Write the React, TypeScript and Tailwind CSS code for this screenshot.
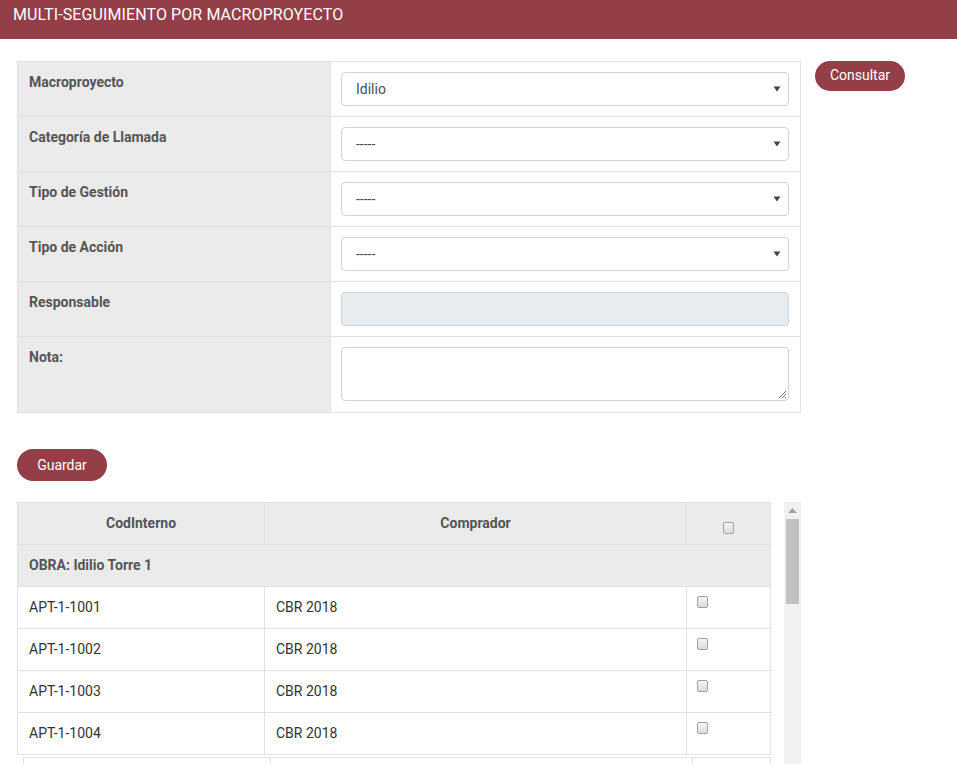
import React from "react";

const Arrow = () => (
  <svg width="8" height="6" viewBox="0 0 8 6" className="absolute right-[7px] top-[13px]">
    <path d="M0.5 0.5 L7.5 0.5 L4 5.5 Z" fill="#444" />
  </svg>
);

const Select = ({ value }: { value: string }) => (
  <div className="relative h-[34px] w-full rounded-[4px] border border-[#ced4da] bg-white">
    <span className="absolute left-[14px] top-[6px] text-[14px] leading-[20px] text-[#495057]">{value}</span>
    <Arrow />
  </div>
);

const Check = () => (
  <div className="h-[12px] w-[11px] rounded-[2px] border border-[#a0a0a0] bg-gradient-to-b from-[#f4f4f4] to-[#dcdcdc]" />
);

const rows = [
  { label: "Macroproyecto", el: <Select value="Idilio" /> },
  { label: "Categoría de Llamada", el: <Select value="-----" /> },
  { label: "Tipo de Gestión", el: <Select value="-----" /> },
  { label: "Tipo de Acción", el: <Select value="-----" /> },
  {
    label: "Responsable",
    el: <div className="h-[34px] w-full rounded-[4px] border border-[#ced4da] bg-[#e9ecef]" />,
  },
];

const data = ["APT-1-1001", "APT-1-1002", "APT-1-1003", "APT-1-1004"];

export default function App() {
  return (
    <div
      className="h-[764px] w-[957px] overflow-hidden bg-white text-[14px]"
      style={{ fontFamily: "Roboto, 'Liberation Sans', sans-serif" }}
    >
      <div className="h-[39px] bg-[#943e48] pl-[13px] pt-[4px] text-[16px] leading-[22px] tracking-[0.1px] text-white">
        MULTI-SEGUIMIENTO POR MACROPROYECTO
      </div>

      <div className="flex items-start pl-[17px] pt-[22px]">
        <div className="w-[784px] border border-[#dfe2e6]">
          {rows.map((r, i) => (
            <div key={i} className="flex h-[55px] border-b border-[#dfe2e6]">
              <div className="w-[312px] bg-[#ebebeb] pl-[11px] pt-[10px] font-bold leading-[20px] text-[#555]">
                {r.label}
              </div>
              <div className="flex-1 border-l border-[#dfe2e6] bg-white pl-[10px] pr-[11px] pt-[10px]">{r.el}</div>
            </div>
          ))}
          <div className="flex h-[75px]">
            <div className="w-[312px] bg-[#ebebeb] pl-[11px] pt-[10px] font-bold leading-[20px] text-[#555]">Nota:</div>
            <div className="flex-1 border-l border-[#dfe2e6] bg-white pl-[10px] pr-[11px] pt-[10px]">
              <div className="relative h-[54px] w-full rounded-[4px] border border-[#ced4da] bg-white">
                <svg width="9" height="9" viewBox="0 0 9 9" className="absolute bottom-[1px] right-[1px]">
                  <path d="M8 1 L1 8 M8 4 L4 8 M8 7 L7 8" stroke="#777" strokeWidth="1" />
                </svg>
              </div>
            </div>
          </div>
        </div>
        <button className="ml-[14px] h-[30px] w-[90px] rounded-full bg-[#943e48] pb-[1px] text-[14px] text-white">
          Consultar
        </button>
      </div>

      <div className="pl-[17px] pt-[36px]">
        <button className="h-[32px] w-[90px] rounded-full bg-[#943e48] text-[14px] text-white">Guardar</button>
      </div>

      <div className="flex pl-[17px] pt-[21px]">
        <div className="w-[754px]">
          <div className="border-x border-t border-[#dfe2e6]">
            <div className="flex h-[42px] border-b border-[#dfe2e6] bg-[#ebebeb] font-bold text-[#555]">
              <div className="flex w-[246px] items-center justify-center pb-[1px] leading-[20px]">CodInterno</div>
              <div className="flex w-[422px] items-center justify-center border-l border-[#dfe2e6] pb-[1px] leading-[20px]">
                Comprador
              </div>
              <div className="flex flex-1 justify-center border-l border-[#dfe2e6] pt-[19px]">
                <Check />
              </div>
            </div>
            <div className="flex h-[42px] items-center border-b border-[#dfe2e6] bg-[#ebebeb] pl-[11px] font-bold text-[#555]">
              OBRA: Idilio Torre 1
            </div>
            {data.map((d) => (
              <div key={d} className="flex h-[42px] border-b border-[#dfe2e6] text-[#333]">
                <div className="flex w-[246px] items-center pl-[11px]">{d}</div>
                <div className="flex w-[422px] items-center border-l border-[#dfe2e6] pl-[11px]">CBR 2018</div>
                <div className="flex-1 border-l border-[#dfe2e6] pl-[10px] pt-[9px]">
                  <Check />
                </div>
              </div>
            ))}
          </div>
          <div className="ml-[6px] mt-[2px] flex h-[20px] border-x border-t border-[#dfe2e6]">
            <div className="w-[246px]" />
            <div className="w-[422px] border-l border-[#dfe2e6]" />
            <div className="flex-1 border-l border-[#dfe2e6]" />
          </div>
        </div>
        <div className="relative ml-[13px] h-[270px] w-[17px] bg-[#f1f1f1]">
          <svg width="9" height="5" viewBox="0 0 9 5" className="absolute left-[4px] top-[6px]">
            <path d="M0 5 L4.5 0 L9 5 Z" fill="#a3a3a3" />
          </svg>
          <div className="absolute left-[2px] top-[17px] h-[85px] w-[13px] bg-[#c1c1c1]" />
        </div>
      </div>
    </div>
  );
}
